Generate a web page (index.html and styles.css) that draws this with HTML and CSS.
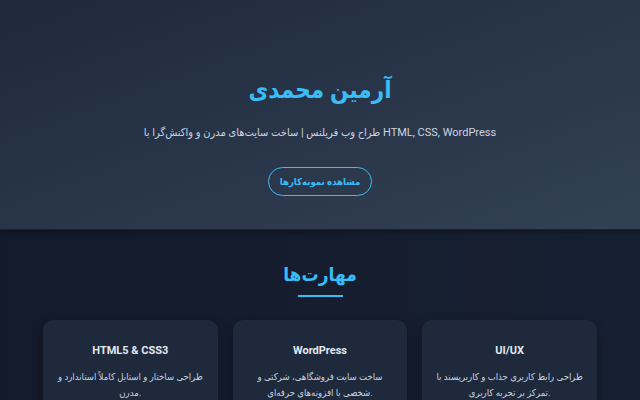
FILE: index.html
```html
<!DOCTYPE html>
<html lang="fa">
<head>
    <meta charset="UTF-8">
    <meta name="viewport" content="width=device-width, initial-scale=1.0">
    <title>آرمین محمدی | طراح وب</title>
    <link rel="stylesheet" href="styles.css">
</head>
<body>
    <header class="hero">
        <h1>آرمین محمدی</h1>
        <p>طراح وب فریلنس | ساخت سایت‌های مدرن و واکنش‌گرا با HTML, CSS, WordPress</p>
        <a href="#portfolio" class="btn-outline">مشاهده نمونه‌کارها</a>
    </header>

    <section class="skills" id="skills">
        <h2 class="section-title">مهارت‌ها</h2>
        <div class="skills-grid">
            <div class="skill-card">
                <h3>HTML5 &amp; CSS3</h3>
                <p>طراحی ساختار و استایل کاملاً استاندارد و مدرن.</p>
            </div>
            <div class="skill-card">
                <h3>WordPress</h3>
                <p>ساخت سایت فروشگاهی، شرکتی و شخصی با افزونه‌های حرفه‌ای.</p>
            </div>
            <div class="skill-card">
                <h3>UI/UX</h3>
                <p>طراحی رابط کاربری جذاب و کاربرپسند با تمرکز بر تجربه کاربری.</p>
            </div>
        </div>
    </section>
</body>
</html>
```

FILE: styles.css
```css
* {
    box-sizing: border-box;
}
body {
    margin: 0;
    font-family: Roboto, "DejaVu Sans Condensed", "DejaVu Sans", sans-serif;
    background: linear-gradient(90deg, #131a2b, #172032);
    color: #e2e8f0;
    height: 400px;
    overflow: hidden;
}
.hero {
    display: flex;
    flex-direction: column;
    align-items: center;
    text-align: center;
    padding: 72px 20px 33px;
    background: linear-gradient(160deg, #1e293b, #334155);
    border-bottom: 1px solid #1a2232;
    box-shadow: 0 2px 6px rgba(0,0,0,0.35);
}
.hero h1 {
    margin: 0;
    font-size: 24px;
    line-height: 36px;
    font-weight: bold;
    color: #38bdf8;
}
.hero p {
    margin: 15px 0 0;
    font-size: 11px;
    line-height: 20px;
    color: #cbd5e1;
}
.btn-outline {
    display: inline-flex;
    align-items: center;
    justify-content: center;
    margin-top: 24px;
    width: 104px;
    height: 29px;
    border: 1.5px solid #38bdf8;
    border-radius: 15px;
    color: #38bdf8;
    font-size: 9.5px;
    font-weight: bold;
    text-decoration: none;
}
.skills {
    padding: 30px 0 40px;
    text-align: center;
}
.section-title {
    margin: 0;
    font-size: 19px;
    line-height: 30px;
    font-weight: bold;
    color: #38bdf8;
}
.section-title::after {
    content: "";
    display: block;
    width: 45px;
    height: 2px;
    margin: 5px auto 0;
    background: #38bdf8;
}
.skills-grid {
    display: grid;
    grid-template-columns: repeat(3, 1fr);
    gap: 15px;
    width: 554px;
    margin: 23px auto 0;
}
.skill-card {
    background: #1e293b;
    border-radius: 10px;
    padding: 23px 12px 20px;
    box-shadow: 0 4px 12px rgba(0,0,0,0.3);
}
.skill-card h3 {
    margin: 0;
    font-size: 11px;
    line-height: 16px;
    font-weight: bold;
    color: #e2e8f0;
}
.skill-card p {
    margin: 10px 0 0;
    font-size: 9.5px;
    line-height: 16px;
    color: #cbd5e1;
}
```
